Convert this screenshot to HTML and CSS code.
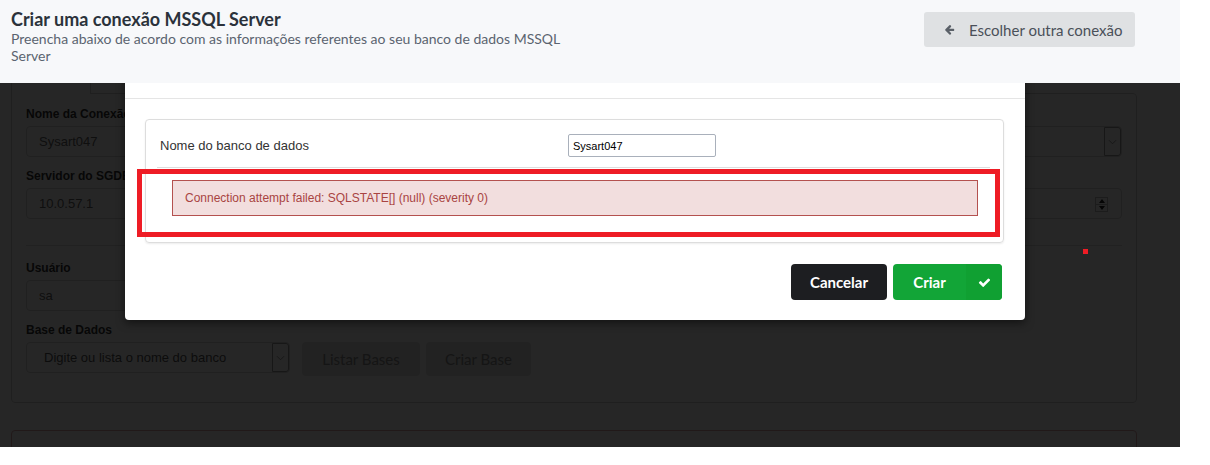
FILE: index.html
```html
<!DOCTYPE html>
<html lang="pt-BR">
<head>
    <meta charset="UTF-8">
    <title>Criar uma conexão MSSQL Server</title>
    <link rel="stylesheet" href="styles.css">
</head>
<body>

<div class="app">

    <header class="topbar">
        <div class="titles">
            <h1 class="page-title">Criar uma conexão MSSQL Server</h1>
            <p class="page-sub">Preencha abaixo de acordo com as informações referentes ao seu banco de dados MSSQL Server</p>
        </div>
        <button class="btn-back">
            <svg class="ico-back" viewBox="0 0 1792 1792"><path d="M1664 896v128q0 53-32.5 90.5t-84.5 37.5h-704l293 294q38 36 38 90t-38 90l-75 76q-37 37-90 37-52 0-91-37l-651-652q-37-37-37-90 0-52 37-91l651-650q38-38 91-38 52 0 90 38l75 74q38 38 38 91t-38 91l-293 293h704q52 0 84.5 37.5t32.5 90.5z"/></svg>
            Escolher outra conexão
        </button>
    </header>

    <main class="content">
        <div class="tabs">
            <div class="tab active"></div>
        </div>

        <div class="panel">
            <div class="grid2">
                <div class="field">
                    <label>Nome da Conexão</label>
                    <div class="input">Sysart047</div>
                </div>
                <div class="field">
                    <label>Tipo de Autenticação</label>
                    <div class="input select">SQL Server<span class="sel-arrow"><svg viewBox="0 0 10 6"><polyline points="1,1 5,5 9,1"/></svg></span></div>
                </div>
                <div class="field">
                    <label>Servidor do SGDB</label>
                    <div class="input">10.0.57.1</div>
                </div>
                <div class="field">
                    <label>Porta</label>
                    <div class="input number">1433<span class="spinner"><i class="up"></i><i class="down"></i></span></div>
                </div>
            </div>

            <hr class="sep">

            <div class="grid2">
                <div class="field">
                    <label>Usuário</label>
                    <div class="input">sa</div>
                </div>
            </div>

            <div class="field last">
                <label>Base de Dados</label>
                <div class="db-line">
                    <div class="input select db-select">Digite ou lista o nome do banco<span class="sel-arrow"><svg viewBox="0 0 10 6"><polyline points="1,1 5,5 9,1"/></svg></span></div>
                    <button class="btn-light listar">Listar Bases</button>
                    <button class="btn-light">Criar Base</button>
                </div>
            </div>
        </div>

        <div class="panel panel-danger">
            <h4>Comandos Extras</h4>
        </div>
    </main>

    <div class="backdrop"></div>

    <!-- Create database modal -->
    <div class="modal">
        <div class="modal-header"></div>
        <div class="modal-body">
            <div class="db-panel">
                <div class="db-row">
                    <span class="db-label">Nome do banco de dados</span>
                    <input class="db-input" type="text" value="Sysart047">
                </div>
                <div class="alert">Connection attempt failed: SQLSTATE[] (null) (severity 0)</div>
            </div>
        </div>
        <div class="modal-footer">
            <button class="btn-dark">Cancelar</button>
            <button class="btn-green">
                <span class="btn-text">Criar</span>
                <span class="btn-icon"><svg viewBox="0 0 1792 1792"><path d="M1671 566q0 40-28 68l-724 724-136 136q-28 28-68 28t-68-28l-136-136-362-362q-28-28-28-68t28-68l136-136q28-28 68-28t68 28l294 295 656-657q28-28 68-28t68 28l136 136q28 28 28 68z"/></svg></span>
            </button>
        </div>
    </div>

    <!-- screenshot markup -->
    <div class="mark-box"></div>
    <div class="mark-dot"></div>

</div>

</body>
</html>
```

FILE: styles.css
```css
* {
    box-sizing: border-box;
}

body {
    margin: 0;
    background: #fff;
    font-family: 'Lato', 'Liberation Sans', sans-serif;
}

.app {
    position: relative;
    width: 1180px;
    height: 447px;
    overflow: hidden;
    background: #fff;
}

/* header */

.topbar {
    position: relative;
    z-index: 3;
    height: 83px;
    background: #f7f8fa;
    display: flex;
    justify-content: space-between;
    align-items: flex-start;
    padding: 8px 45px 0 11px;
}

.page-title {
    margin: 0;
    font-size: 18px;
    line-height: 22px;
    font-weight: 700;
    color: #2b323b;
}

.page-sub {
    margin: 0;
    max-width: 560px;
    font-size: 14px;
    line-height: 17px;
    color: #5b6470;
}

.btn-back {
    margin-top: 4px;
    width: 211px;
    height: 35px;
    border: none;
    border-radius: 3px;
    background: #dfe1e3;
    color: #4a5059;
    font-family: 'Lato', sans-serif;
    font-size: 15px;
    display: flex;
    align-items: center;
    gap: 14px;
    padding: 0 0 0 20px;
}

.ico-back {
    width: 11px;
    height: 11px;
    fill: #5a6068;
}

/* background form */

.content {
    padding: 0 43px 0 11px;
}

.tabs {
    height: 10px;
    display: flex;
}

.tab.active {
    position: relative;
    width: 80px;
    height: 11px;
    background: #fff;
    border-left: 1px solid #d0d0d0;
    border-right: 1px solid #d0d0d0;
}

.panel {
    border: 1px solid #d0d0d0;
    border-radius: 0 4px 4px 4px;
    padding: 13px 14px 26px 14px;
}

.grid2 {
    display: grid;
    grid-template-columns: 1fr 1fr;
    column-gap: 30px;
}

.field {
    margin-bottom: 12px;
}

.field.last {
    margin-bottom: 0;
}

.field label {
    display: block;
    font-family: 'Liberation Sans', Arial, sans-serif;
    font-size: 12px;
    font-weight: bold;
    line-height: 15px;
    margin-bottom: 4px;
    color: #333;
}

.input {
    position: relative;
    height: 31px;
    border: 1px solid #d4d4d4;
    border-radius: 4px;
    padding: 0 12px;
    font-family: 'Liberation Sans', Arial, sans-serif;
    font-size: 13px;
    line-height: 29px;
    color: #666;
}

.sel-arrow {
    position: absolute;
    top: 0;
    right: 0;
    width: 17px;
    height: 29px;
    border: 1px solid #999;
    border-radius: 0 3px 3px 0;
    display: flex;
    align-items: center;
    justify-content: center;
}

.sel-arrow svg {
    width: 9px;
    height: 6px;
    fill: none;
    stroke: #888;
    stroke-width: 1;
}

.spinner {
    position: absolute;
    right: 13px;
    top: 8px;
    width: 13px;
    height: 15px;
    border: 1px solid #bbb;
    display: flex;
    flex-direction: column;
}

.spinner i {
    flex: 1;
    display: flex;
    align-items: center;
    justify-content: center;
}

.spinner .up {
    border-bottom: 1px solid #bbb;
}

.spinner .up::after,
.spinner .down::after {
    content: '';
    border-left: 3px solid transparent;
    border-right: 3px solid transparent;
}

.spinner .up::after {
    border-bottom: 4px solid #222;
}

.spinner .down::after {
    border-top: 4px solid #222;
}

.sep {
    border: 0;
    border-top: 1px solid #ddd;
    margin: 14px 0 15px;
}

.db-line {
    display: flex;
    align-items: flex-start;
}

.db-select {
    width: 264px;
    padding-left: 17px;
    color: #555;
}

.btn-light {
    height: 34px;
    border: none;
    border-radius: 4px;
    background: #e2e2e2;
    color: #8a8a8a;
    font-family: 'Lato', sans-serif;
    font-size: 15px;
    white-space: nowrap;
    width: 105px;
    padding: 0;
    margin-left: 6px;
}

.btn-light.listar {
    margin-left: 12px;
    width: 118px;
}

.panel-danger {
    margin-top: 27px;
    border-color: #dba5aa;
    border-radius: 4px;
    padding: 13px 14px;
}

.panel-danger h4 {
    margin: 0;
    font-size: 15px;
    color: #a94442;
}

/* modal */

.backdrop {
    position: absolute;
    inset: 0;
    z-index: 1;
    background: rgba(0, 0, 0, 0.85);
}

.modal {
    position: absolute;
    z-index: 2;
    left: 125px;
    top: 39px;
    width: 900px;
    background: #fff;
    border-radius: 4px;
    box-shadow: 0 3px 9px rgba(0, 0, 0, 0.5);
}

.modal-header {
    height: 60px;
    border-bottom: 1px solid #e5e5e5;
}

.modal-body {
    padding: 20px 21px 0 20px;
}

.db-panel {
    border: 1px solid #ddd;
    border-radius: 4px;
    box-shadow: 0 1px 2px rgba(0, 0, 0, 0.08);
    padding: 0 13px 26px 11px;
    font-family: 'Liberation Sans', Arial, sans-serif;
}

.db-row {
    display: grid;
    grid-template-columns: 408px 148px;
    align-items: center;
    padding: 14px 3px 10px;
    border-bottom: 1px solid #ddd;
}

.db-label {
    font-size: 13px;
    color: #333;
}

.db-input {
    width: 148px;
    height: 23px;
    border: 1px solid #a9b0bb;
    border-radius: 2px;
    padding: 0 4px;
    font-family: 'Liberation Sans', Arial, sans-serif;
    font-size: 11px;
    color: #000;
}

.alert {
    margin: 12px 12px 0 15px;
    height: 36px;
    background: #f2dede;
    border: 1px solid #b4514f;
    color: #a94442;
    font-size: 12px;
    line-height: 34px;
    padding: 0 12px;
}

.modal-footer {
    display: flex;
    justify-content: flex-end;
    gap: 6px;
    padding: 21px 23px 20px;
}

.btn-dark,
.btn-green {
    height: 36px;
    border: none;
    border-radius: 4px;
    color: #fff;
    font-family: 'Lato', sans-serif;
    font-size: 15px;
    font-weight: 700;
    padding: 0;
}

.btn-dark {
    width: 96px;
    background: #1d1e21;
}

.btn-green {
    width: 109px;
    background: #12a537;
    display: flex;
    overflow: hidden;
}

.btn-text {
    flex: 1;
    line-height: 36px;
}

.btn-icon {
    width: 36px;
    height: 36px;
    background: #10a032;
    display: flex;
    align-items: center;
    justify-content: center;
}

.btn-icon svg {
    width: 13px;
    height: 13px;
    fill: #fff;
}

/* red markings drawn over the screenshot */

.mark-box {
    position: absolute;
    z-index: 5;
    left: 137px;
    top: 169px;
    width: 863px;
    height: 68px;
    border: 5px solid #ee1c25;
}

.mark-dot {
    position: absolute;
    z-index: 5;
    left: 1083px;
    top: 249px;
    width: 5px;
    height: 5px;
    background: #ee1c25;
}
```
